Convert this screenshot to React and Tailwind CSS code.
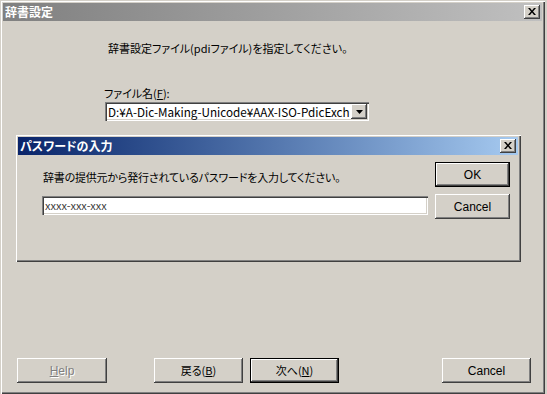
import React from "react";

const jp = "font-['Noto_Sans_CJK_JP',sans-serif] [font-feature-settings:'palt']";
const latin = "font-['Liberation_Sans',Arial,sans-serif]";

const raised =
  "bg-[#d4d0c8] shadow-[inset_-1px_-1px_0_#404040,inset_1px_1px_0_#fff,inset_-2px_-2px_0_#808080]";
const raisedDefault =
  "bg-[#d4d0c8] border border-black shadow-[inset_-1px_-1px_0_#404040,inset_1px_1px_0_#fff,inset_-2px_-2px_0_#808080]";
const sunken =
  "bg-white shadow-[inset_1px_1px_0_#808080,inset_2px_2px_0_#404040,inset_-1px_-1px_0_#fff,inset_-2px_-2px_0_#d4d0c8]";

const CloseBox = () => (
  <div className={`w-[16px] h-[14px] flex items-center justify-center ${raised}`}>
    <svg width="8" height="7" viewBox="0 0 8 7" className="-mt-[1px]">
      <path d="M0 0h2l2 2.5L6 0h2L5 3.5 8 7H6L4 4.5 2 7H0l3-3.5z" fill="#000" />
    </svg>
  </div>
);

const Button = ({ children, isDefault, className = "" }) => (
  <div
    className={`flex items-center justify-center text-[12px] leading-none text-black ${
      isDefault ? raisedDefault : raised
    } ${className}`}
  >
    {children}
  </div>
);

const App = () => {
  return (
    <div className="relative w-[547px] h-[394px] bg-[#d4d0c8] overflow-hidden">
      {/* outer wizard window */}
      <div className="w-[545px] h-[394px] p-[3px] flex flex-col shadow-[inset_1px_1px_0_#d4d0c8,inset_2px_2px_0_#fff,inset_-1px_-1px_0_#404040,inset_-2px_-2px_0_#808080]">
        <div className="h-[18px] flex items-center justify-between bg-gradient-to-r from-[#808080] to-[#c0c0c0] pl-[2px] pr-[2px]">
          <span className={`${jp} text-[12px] font-bold text-white leading-none`}>辞書設定</span>
          <CloseBox />
        </div>

        <div className="flex-1 flex flex-col">
          <p className={`${jp} text-[11px] leading-[14px] text-black mt-[20px] pl-[105px]`}>
            辞書設定ファイル(pdiファイル)を指定してください。
          </p>
          <p className={`${jp} text-[11px] leading-[14px] text-black mt-[31px] pl-[101px]`}>
            ファイル名(<span className="underline">F</span>):
          </p>
          <div className={`mt-[2px] ml-[102px] w-[264px] h-[19px] flex items-center ${sunken} p-[2px]`}>
            <span className={`${jp} flex-1 whitespace-nowrap text-[11.7px] leading-none text-black pl-[1px]`}>
              D:¥A-Dic-Making-Unicode¥AAX-ISO-PdicExch
            </span>
            <div className={`w-[16px] h-[15px] flex items-center justify-center shrink-0 ${raised}`}>
              <svg width="7" height="4" viewBox="0 0 7 4">
                <path d="M0 0h7L3.5 4z" fill="#000" />
              </svg>
            </div>
          </div>

          {/* bottom buttons */}
          <div className="mt-auto mb-[8px] flex items-center pl-[14px]">
            <Button className="w-[90px] h-[25px]">
              <span className={`${latin} text-[#808080] [text-shadow:1px_1px_0_#fff]`}>
                <span className="underline">H</span>elp
              </span>
            </Button>
            <Button className="w-[89px] h-[25px] ml-[47px]">
              <span className={`${jp} text-[11px]`}>
                戻る(<span className="underline">B</span>)
              </span>
            </Button>
            <Button isDefault className="w-[89px] h-[25px] ml-[7px]">
              <span className={`${jp} text-[11px]`}>
                次へ(<span className="underline">N</span>)
              </span>
            </Button>
            <Button className="w-[89px] h-[25px] ml-[103px]">
              <span className={latin}>Cancel</span>
            </Button>
          </div>
        </div>
      </div>

      {/* password dialog on top */}
      <div className="absolute left-[15px] top-[134px] w-[506px] h-[128px] p-[3px] bg-[#d4d0c8] flex flex-col shadow-[inset_1px_1px_0_#d4d0c8,inset_2px_2px_0_#fff,inset_-1px_-1px_0_#404040,inset_-2px_-2px_0_#808080]">
        <div className="h-[18px] flex items-center justify-between bg-gradient-to-r from-[#0a246a] to-[#a6caf0] pl-[2px] pr-[2px]">
          <span className={`${jp} text-[12px] font-bold text-white leading-none`}>パスワードの入力</span>
          <CloseBox />
        </div>
        <div className="flex">
          <div className="ml-[24px] w-[386px] flex flex-col">
            <p className={`${jp} text-[11px] leading-[14px] text-black mt-[15px] pl-[1px] tracking-[-0.2px]`}>
              辞書の提供元から発行されているパスワードを入力してください。
            </p>
            <div className={`mt-[12px] h-[19px] flex items-center px-[3px] ${sunken}`}>
              <span className={`${jp} text-[11px] leading-none text-[#404040]`}>xxxx-xxx-xxx</span>
            </div>
          </div>
          <div className="ml-[7px] flex flex-col">
            <Button isDefault className="w-[75px] h-[25px] mt-[7px]">
              <span className={latin}>OK</span>
            </Button>
            <Button className="w-[75px] h-[25px] mt-[7px]">
              <span className={latin}>Cancel</span>
            </Button>
          </div>
        </div>
      </div>
    </div>
  );
};

export default App;
